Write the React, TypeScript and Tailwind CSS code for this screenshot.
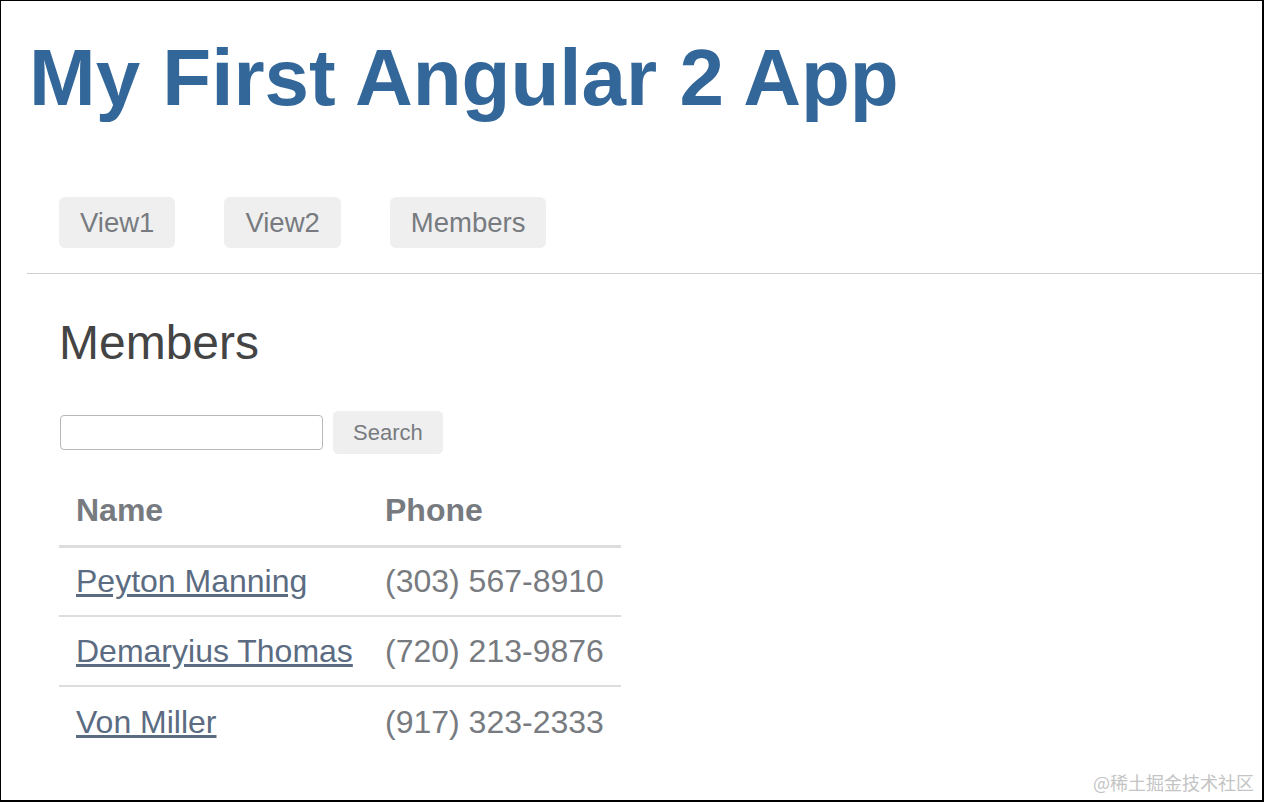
import React, { useState } from 'react';

const members = [
    { name: 'Peyton Manning', phone: '(303) 567-8910' },
    { name: 'Demaryius Thomas', phone: '(720) 213-9876' },
    { name: 'Von Miller', phone: '(917) 323-2333' },
];

const navItems = ['View1', 'View2', 'Members'];

const App: React.FC = () => {
    const [query, setQuery] = useState('');

    return (
        <div className="relative w-[1264px] h-[802px] overflow-hidden bg-white border-t border-l border-r-2 border-b-2 border-black font-['Liberation_Sans',Arial,sans-serif]">
            <h1 className="ml-[28px] mt-[37px] h-[80px] leading-[80px] text-[80px] font-bold text-[#336699]">
                My First Angular 2 App
            </h1>

            <nav className="mt-[79px] ml-[58px] flex gap-[49px]">
                {navItems.map(item => (
                    <a key={item} href="#" className="h-[51px] px-[21px] flex items-center rounded-[6px] bg-[#efefef] text-[27.5px] text-[#777b80]">
                        {item}
                    </a>
                ))}
            </nav>

            <div className="mt-[25px] ml-[26px] h-px bg-[#cfcfcf]" />

            <div className="ml-[58px]">
                <h2 className="mt-[45px] h-[48px] leading-[48px] text-[48px] text-[#444]">Members</h2>

                <div className="mt-[44px] ml-px flex items-center">
                    <input
                        value={query}
                        onChange={e => setQuery(e.target.value)}
                        className="w-[263px] h-[35px] border border-[#b8b8b8] rounded-[4px] px-2 text-[18px] outline-none"
                    />
                    <button className="ml-[10px] h-[43px] px-[20px] rounded-[5px] bg-[#efefef] text-[22px] text-[#777b80]">
                        Search
                    </button>
                </div>

                <table className="mt-[21px] w-[562px] table-fixed border-collapse text-[32px]">
                    <thead>
                        <tr>
                            <th className="w-[311px] h-[71px] pl-[17px] pr-[8px] text-left align-middle font-bold text-[#777b80] border-b-[3px] border-[#dddddd]">Name</th>
                            <th className="w-[251px] h-[71px] pl-[15px] pr-[8px] text-left align-middle font-bold text-[#777b80] border-b-[3px] border-[#dddddd]">Phone</th>
                        </tr>
                    </thead>
                    <tbody>
                        {members.map(m => (
                            <tr key={m.name}>
                                <td className="h-[70px] pl-[17px] pr-[8px] align-middle whitespace-nowrap border-t-2 border-[#dddddd]">
                                    <a href="#" className="text-[#5b6c82] underline">{m.name}</a>
                                </td>
                                <td className="h-[70px] pl-[15px] pr-[8px] align-middle whitespace-nowrap text-[#777b80] border-t-2 border-[#dddddd]">{m.phone}</td>
                            </tr>
                        ))}
                    </tbody>
                </table>
            </div>

            <div className="absolute right-[8px] bottom-[8px] text-[18px] leading-[20px] text-[#c4c4c4] font-['Noto_Sans_CJK_SC',sans-serif]">
                @稀土掘金技术社区
            </div>
        </div>
    );
};

export default App;
